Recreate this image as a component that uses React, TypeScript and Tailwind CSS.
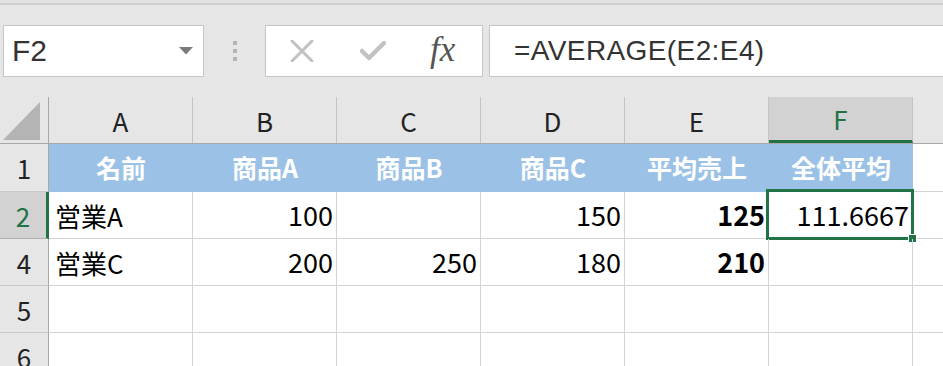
import { ReactNode } from 'react';

const font = { fontFamily: '"Noto Sans CJK JP", "Liberation Sans", sans-serif' };

const cols = ['A', 'B', 'C', 'D', 'E', 'F'];

type Cell = { v?: string; align?: 'left' | 'right' | 'center'; bold?: boolean };

const rows: { n: string; cells: Cell[] }[] = [
  {
    n: '2',
    cells: [
      { v: '営業A', align: 'left' },
      { v: '100', align: 'right' },
      {},
      { v: '150', align: 'right' },
      { v: '125', align: 'right', bold: true },
      { v: '111.6667', align: 'right' },
    ],
  },
  {
    n: '4',
    cells: [
      { v: '営業C', align: 'left' },
      { v: '200', align: 'right' },
      { v: '250', align: 'right' },
      { v: '180', align: 'right' },
      { v: '210', align: 'right', bold: true },
      {},
    ],
  },
  { n: '5', cells: [{}, {}, {}, {}, {}, {}] },
  { n: '6', cells: [{}, {}, {}, {}, {}, {}] },
];

function RowHead({ children, selected }: { children: ReactNode; selected?: boolean }) {
  return (
    <div
      className={`w-[49px] shrink-0 flex items-center justify-center text-[26px] border-b ${
        selected
          ? 'bg-[#d2d2d2] text-[#217346] border-b-[#b0b0b0] border-r-[3px] border-r-[#217346]'
          : 'bg-[#e6e6e6] text-[#222] border-b-[#c8c8c8] border-r border-r-[#a8a8a8]'
      }`}
    >
      {children}
    </div>
  );
}

export default function App() {
  return (
    <div className="w-[943px] h-[366px] overflow-hidden bg-[#e6e6e6] text-black" style={font}>
      {/* top edge */}
      <div className="h-[3px] bg-[#e2e2e2]" />
      <div className="h-[2px] bg-[#d0d0d0]" />

      {/* formula bar */}
      <div className="h-[92px] flex items-start pt-[20px] pl-[3px]">
        <div className="w-[201px] h-[52px] bg-white border border-[#c6c6c6] flex items-center justify-between pl-[8px] pr-[10px]">
          <span className="text-[30px] text-[#333] leading-none" style={{ fontFamily: '"Liberation Sans", sans-serif' }}>
            F2
          </span>
          <svg width="14" height="8" viewBox="0 0 14 8">
            <path d="M0 0 H14 L7 7.5 Z" fill="#7a7a7a" />
          </svg>
        </div>
        <div className="w-[61px] h-[52px] flex flex-col items-center justify-center gap-[4px]">
          <div className="w-[4px] h-[4px] bg-[#b4b4b4]" />
          <div className="w-[4px] h-[4px] bg-[#b4b4b4]" />
          <div className="w-[4px] h-[4px] bg-[#b4b4b4]" />
        </div>
        <div className="w-[218px] h-[52px] bg-white border border-[#c6c6c6] flex items-center pl-[24px]">
          <svg width="24" height="22" viewBox="0 0 24 22">
            <path d="M2 1 L22 21 M22 1 L2 21" stroke="#c2c2c2" strokeWidth="3" strokeLinecap="round" fill="none" />
          </svg>
          <svg width="26" height="20" viewBox="0 0 26 20" className="ml-[46px]">
            <path d="M2 10 L9 17 L24 2" stroke="#c2c2c2" strokeWidth="4.5" strokeLinecap="round" strokeLinejoin="round" fill="none" />
          </svg>
          <span
            className="ml-[44px] text-[35px] italic text-[#555] leading-none -mt-[4px]"
            style={{ fontFamily: '"Liberation Serif", serif' }}
          >
            fx
          </span>
        </div>
        <div className="w-[6px]" />
        <div className="flex-1 h-[52px] bg-white border border-[#c6c6c6] border-r-0 flex items-center pl-[24px]">
          <span
            className="text-[28px] text-[#333] leading-none tracking-[0.4px]"
            style={{ fontFamily: '"Liberation Sans", sans-serif' }}
          >
            =AVERAGE(E2:E4)
          </span>
        </div>
      </div>

      {/* column headers */}
      <div className="flex h-[47px] border-b border-[#a8a8a8]">
        <div className="w-[49px] shrink-0 border-r border-[#a8a8a8] flex items-center justify-center">
          <svg width="40" height="40" viewBox="0 0 40 40" className="ml-[-4px] mt-[2px]">
            <path d="M38 1 V39 H1 Z" fill="#b4b4b4" />
          </svg>
        </div>
        {cols.map((c) => (
          <div
            key={c}
            className={`w-[144px] shrink-0 flex items-center justify-center text-[26px] border-r border-[#c4c4c4] ${
              c === 'F' ? 'bg-[#d2d2d2] text-[#217346] border-b-[3px] border-b-[#217346]' : 'text-[#222]'
            }`}
          >
            {c}
          </div>
        ))}
        <div className="flex-1" />
      </div>

      {/* row 1 */}
      <div className="flex h-[48px] bg-white">
        <RowHead>1</RowHead>
        {['名前', '商品A', '商品B', '商品C', '平均売上', '全体平均'].map((h) => (
          <div
            key={h}
            className="w-[144px] shrink-0 bg-[#9bc2e6] text-white font-bold text-[25px] flex items-center justify-center"
          >
            {h}
          </div>
        ))}
        <div className="flex-1 border-b border-[#d4d4d4]" />
      </div>

      {/* data rows */}
      {rows.map((r) => (
        <div key={r.n} className="flex h-[47px] bg-white">
          <RowHead selected={r.n === '2'}>{r.n}</RowHead>
          {r.cells.map((cell, i) => (
            <div
              key={i}
              className={`relative w-[144px] shrink-0 flex items-center border-r border-b border-[#d4d4d4] pl-[6px] pr-[3px] ${
                cell.align === 'right' ? 'justify-end text-[27px]' : 'justify-start text-[26px]'
              } ${cell.bold ? 'font-bold' : ''}`}
            >
              {cell.v}
              {r.n === '2' && i === 5 && (
                <>
                  <div className="absolute left-[-3px] right-[-2px] top-[-3px] bottom-[-2px] border-[3px] border-[#217346]" />
                  <div className="absolute right-[-5px] bottom-[-5px] w-[9px] h-[9px] bg-[#217346] border border-white" />
                </>
              )}
            </div>
          ))}
          <div className="flex-1 border-b border-[#d4d4d4]" />
        </div>
      ))}
    </div>
  );
}
